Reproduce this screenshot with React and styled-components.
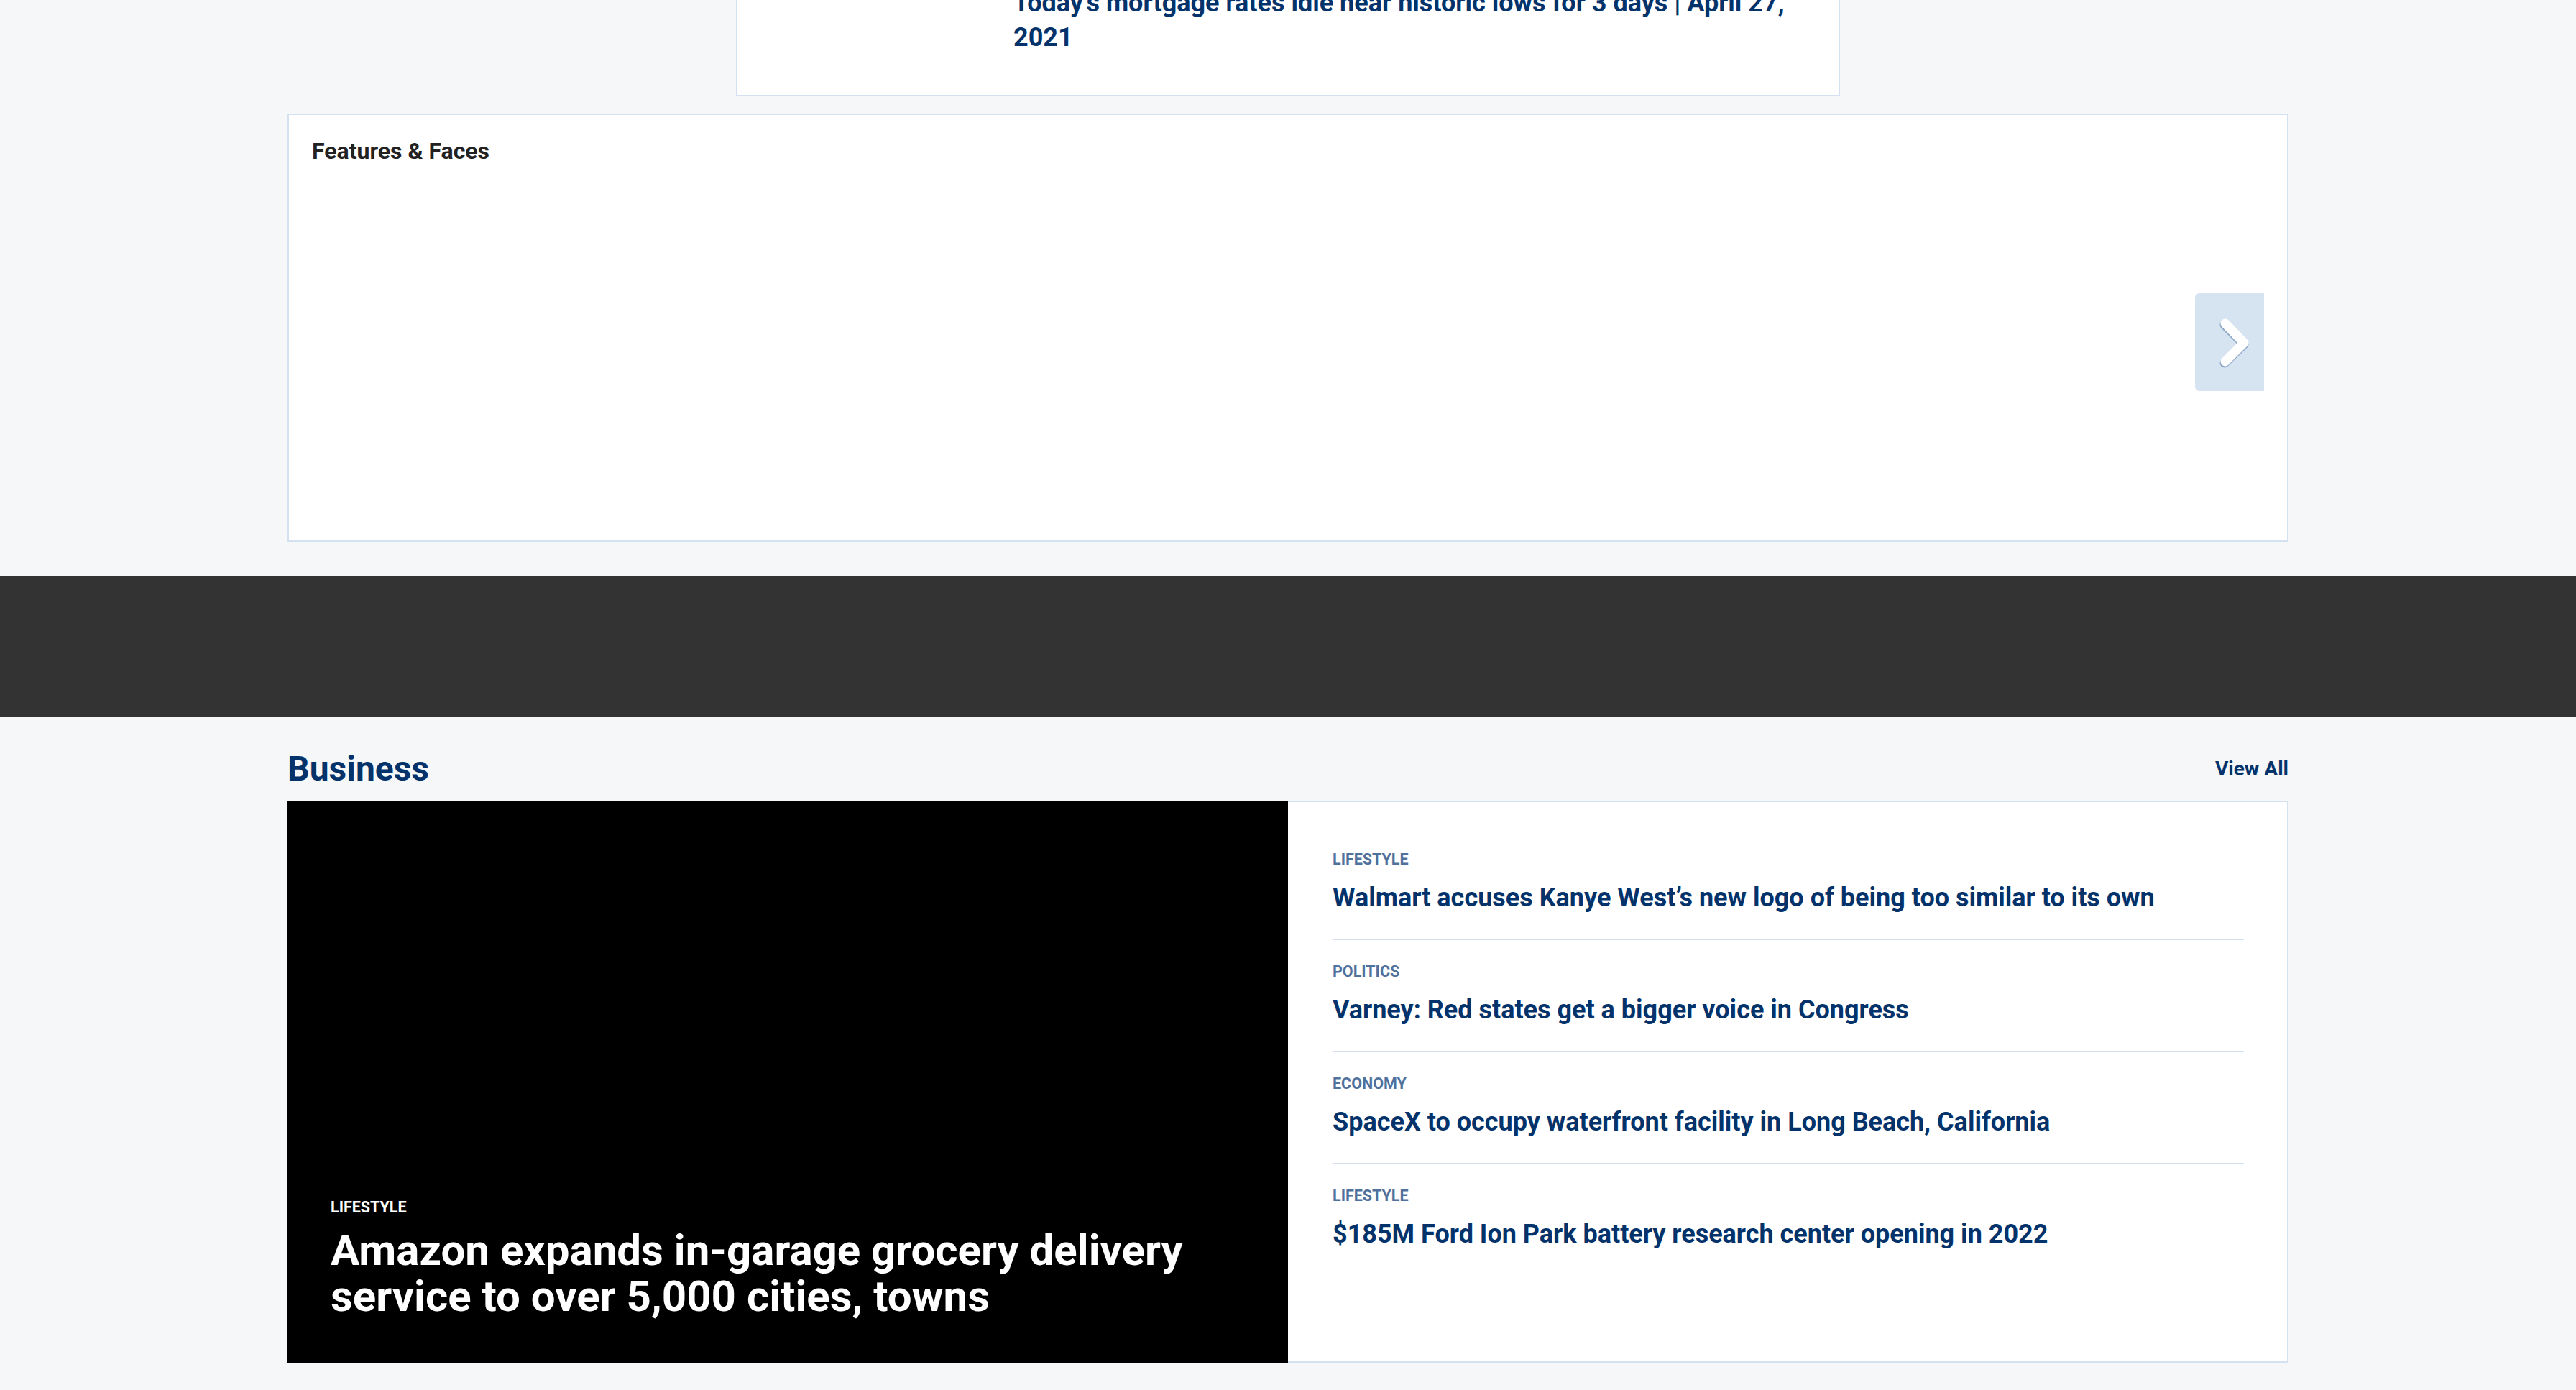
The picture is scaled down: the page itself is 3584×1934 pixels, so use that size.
import React from "react";
import styled, { createGlobalStyle } from "styled-components";

const GlobalStyle = createGlobalStyle`
  html, body {
    margin: 0;
    padding: 0;
    background: #f5f7f9;
    font-family: Roboto, "Liberation Sans", Arial, sans-serif;
  }
  * { box-sizing: border-box; }
`;

const Page = styled.div`
  width: 100%;
  display: flex;
  flex-direction: column;
  align-items: center;
  overflow: hidden;
`;

const Inner = styled.div`
  width: 2784px;
  display: flex;
  flex-direction: column;
`;

const TopCard = styled.div`
  width: 1536px;
  margin-top: -54px;
  display: flex;
  background: #fff;
  border: 2px solid #d3e1f0;
`;

const Thumb = styled.div`
  width: 384px;
  flex: none;
`;

const TopText = styled.a`
  flex: 1;
  padding: 32px 48px 56px 0;
  font-size: 36px;
  line-height: 48px;
  font-weight: 700;
  color: #03336a;
  text-decoration: none;
`;

const Card = styled.section`
  margin-top: 24px;
  background: #fff;
  border: 2px solid #d3e1f0;
  padding: 32px;
`;

const CardTitle = styled.h2`
  margin: 0;
  font-size: 32px;
  line-height: 36px;
  font-weight: 700;
  color: #222;
`;

const Carousel = styled.div`
  position: relative;
  height: 492px;
`;

const NextButton = styled.button`
  position: absolute;
  right: 0;
  top: calc(50% + 2px);
  transform: translateY(-50%);
  width: 96px;
  height: 136px;
  border: none;
  padding: 0;
  border-radius: 6px 0 0 6px;
  background: #d6e4f1;
  display: flex;
  align-items: center;
  justify-content: center;
  cursor: pointer;
`;

const Band = styled.div`
  width: 100%;
  height: 196px;
  margin-top: 48px;
  background: #333333;
`;

const SectionHead = styled.div`
  display: flex;
  align-items: center;
  justify-content: space-between;
  height: 56px;
  margin: 44px 0 16px;
`;

const SectionTitle = styled.h2`
  margin: 0;
  font-size: 48px;
  line-height: 56px;
  font-weight: 700;
  color: #03336a;
`;

const ViewAll = styled.a`
  font-size: 28px;
  line-height: 32px;
  font-weight: 700;
  color: #03336a;
  text-decoration: none;
`;

const Business = styled.div`
  display: grid;
  grid-template-columns: 1fr 1fr;
  height: 782px;
  margin-bottom: 40px;
`;

const Hero = styled.article`
  background: #000;
  display: flex;
  flex-direction: column;
  justify-content: flex-end;
  padding: 60px;
`;

const Kicker = styled.span`
  display: block;
  font-size: 21.5px;
  line-height: 24px;
  font-weight: 700;
  text-transform: uppercase;
  color: ${(p) => (p.light ? "#fff" : "#4f719c")};
`;

const HeroTitle = styled.h3`
  margin: 16px 0 0;
  font-size: 60px;
  line-height: 64px;
  font-weight: 700;
  color: #fff;
`;

const List = styled.div`
  background: #fff;
  border: 2px solid #d3e1f0;
  border-left: none;
  padding: 36px 60px 0 62px;
  display: flex;
  flex-direction: column;
`;

const Item = styled.article`
  padding: 32px 0 37px;
  border-bottom: ${(p) => (p.last ? "none" : "2px solid #d3e1f0")};
`;

const ItemTitle = styled.h3`
  margin: 21px 0 0;
  font-size: 36px;
  line-height: 40px;
  font-weight: 700;
  color: #03336a;
`;

const stories = [
  { tag: "Lifestyle", title: "Walmart accuses Kanye West\u2019s new logo of being too similar to its own" },
  { tag: "Politics", title: "Varney: Red states get a bigger voice in Congress" },
  { tag: "Economy", title: "SpaceX to occupy waterfront facility in Long Beach, California" },
  { tag: "Lifestyle", title: "$185M Ford Ion Park battery research center opening in 2022" },
];

function Chevron() {
  return (
    <svg width="96" height="136" viewBox="0 0 96 136">
      <polyline points="41,44 68,71 41,97" fill="none" stroke="#8ea8c7" strokeWidth="13" strokeLinecap="round" strokeLinejoin="round" />
      <polyline points="42,42 68,69 42,95" fill="none" stroke="#fff" strokeWidth="13" strokeLinecap="round" strokeLinejoin="round" />
    </svg>
  );
}

export default function App() {
  return (
    <Page>
      <GlobalStyle />
      <TopCard>
        <Thumb />
        <TopText href="#">Today's mortgage rates idle near historic lows for 3 days | April 27, 2021</TopText>
      </TopCard>
      <Inner>
        <Card>
          <CardTitle>Features &amp; Faces</CardTitle>
          <Carousel>
            <NextButton aria-label="Next">
              <Chevron />
            </NextButton>
          </Carousel>
        </Card>
      </Inner>
      <Band />
      <Inner>
        <SectionHead>
          <SectionTitle>Business</SectionTitle>
          <ViewAll href="#">View All</ViewAll>
        </SectionHead>
        <Business>
          <Hero>
            <Kicker light>Lifestyle</Kicker>
            <HeroTitle>Amazon expands in-garage grocery delivery service to over 5,000 cities, towns</HeroTitle>
          </Hero>
          <List>
            {stories.map((s, i) => (
              <Item key={i} last={i === stories.length - 1}>
                <Kicker>{s.tag}</Kicker>
                <ItemTitle>{s.title}</ItemTitle>
              </Item>
            ))}
          </List>
        </Business>
      </Inner>
    </Page>
  );
}
